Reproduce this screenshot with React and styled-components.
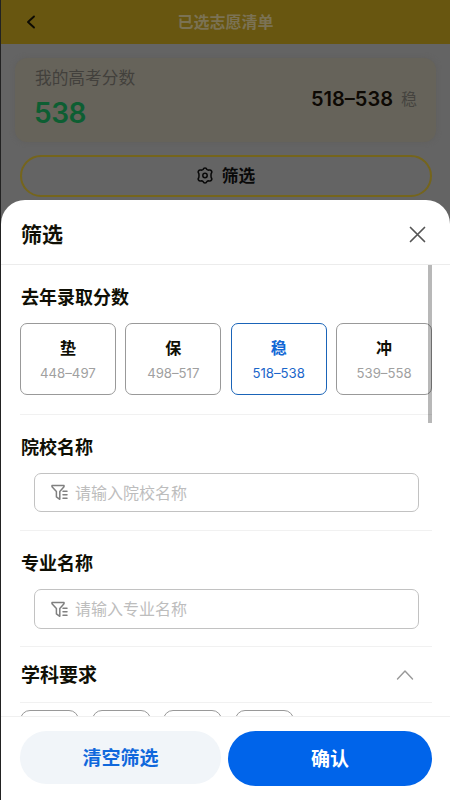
import React from "react";
import styled, { createGlobalStyle } from "styled-components";

const Global = createGlobalStyle`
  * { box-sizing: border-box; }
  body { margin: 0; background: #fff; }
  button, input { font: inherit; margin: 0; }
  h1, h2, h3, p { margin: 0; }
`;

const Screen = styled.div`
  position: relative;
  width: 450px;
  height: 800px;
  overflow: hidden;
  border-left: 1px solid #222;
  background: #646464;
  color: #0f0f05;
  font-family: Inter, "Noto Sans CJK SC", sans-serif;
`;

const TopBar = styled.header`
  display: grid;
  grid-template-columns: 60px 1fr 60px;
  align-items: center;
  height: 44px;
  background: #685610;
`;

const BackButton = styled.button`
  display: flex;
  padding: 0 0 0 22px;
  border: 0;
  background: none;
  color: #0d0b04;
`;

const PageTitle = styled.h1`
  color: #7b7254;
  font-size: 16px;
  line-height: 24px;
  font-weight: 700;
  text-align: center;
`;

const ScoreCard = styled.section`
  display: flex;
  align-items: center;
  justify-content: space-between;
  height: 84px;
  margin: 14px 14px 0;
  padding: 0 19px 3px 20px;
  border-radius: 12px;
  background: #66635a;
  box-shadow: 0 0 5px #605f5d;
`;

const ScoreLabel = styled.p`
  color: #42403c;
  font-size: 16.7px;
  line-height: 24px;
`;

const Score = styled.p`
  margin: 4px 0 0 -1px;
  color: #0d5e32;
  font-size: 28px;
  line-height: 38px;
  font-weight: 600;
  letter-spacing: -0.4px;
`;

const Range = styled.div`
  display: flex;
  align-items: center;
  gap: 8px;
  font-size: 20px;
  line-height: 28px;
  font-weight: 600;
  color: #0d0904;
`;

const RangeTag = styled.span`
  color: #45433f;
  font-size: 16px;
  font-weight: 400;
`;

const FilterTrigger = styled.button`
  display: flex;
  align-items: center;
  justify-content: center;
  gap: 9px;
  width: 412px;
  height: 42px;
  margin: 13px 0 0 19px;
  padding: 0 0 2px;
  border: 2px solid #75651c;
  border-radius: 21px;
  background: none;
  color: #090909;
  font-size: 16.7px;
  font-weight: 700;
`;

const Sheet = styled.section`
  position: absolute;
  inset: 200px 0 0;
  display: flex;
  flex-direction: column;
  border-radius: 24px 24px 0 0;
  background: #fff;
  overflow: hidden;
`;

const SheetHeader = styled.header`
  display: flex;
  flex: none;
  align-items: center;
  justify-content: space-between;
  height: 65px;
  padding: 4px 24px 0 20px;
  border-bottom: 1px solid #ececec;
`;

const SheetTitle = styled.h2`
  padding-top: 1px;
  font-size: 21px;
  line-height: 30px;
  font-weight: 700;
`;

const CloseButton = styled.button`
  display: flex;
  padding: 0;
  border: 0;
  background: none;
  color: #555;
`;

const SheetBody = styled.div`
  position: relative;
  flex: 1;
  min-height: 0;
  padding: 0 18px 0 19px;
  overflow: hidden;
`;

const ScrollThumb = styled.div`
  position: absolute;
  top: 0;
  right: 18px;
  width: 4px;
  height: 158px;
  background: rgba(0, 0, 0, 0.28);
`;

const Group = styled.section`
  height: ${(p) => p.$height}px;
  padding-top: 20px;
  border-bottom: 1px solid #f1f1f1;
`;

const GroupTitle = styled.h3`
  padding-left: 1px;
  font-size: ${(p) => p.$size || 18}px;
  line-height: 26px;
  font-weight: 700;
`;

const Tiers = styled.div`
  display: grid;
  grid-template-columns: repeat(4, 1fr);
  gap: 9.5px;
  margin-top: 12px;
`;

const Tier = styled.button`
  display: flex;
  flex-direction: column;
  align-items: center;
  height: 72px;
  padding: 12px 0 0;
  border: 1px solid ${(p) => (p.$selected ? "#1a64b8" : "#999")};
  border-radius: 7px;
  background: #fff;
  color: ${(p) => (p.$selected ? "#1268d6" : "#0f0f05")};
`;

const TierName = styled.span`
  font-size: 16px;
  line-height: 24px;
  font-weight: 700;
`;

const TierRange = styled.span`
  margin-top: 4px;
  color: ${(p) => (p.$selected ? "#1b66ca" : "#a0a0a0")};
  font-size: 13.2px;
  line-height: 18px;
`;

const Field = styled.label`
  display: flex;
  align-items: center;
  gap: 7px;
  height: ${(p) => p.$height}px;
  margin: 12px 13.5px 0 14px;
  padding-left: 16px;
  border: 1px solid #c2c2c2;
  border-radius: 7px;
  color: #808080;
`;

const Input = styled.input`
  flex: 1;
  min-width: 0;
  padding: 0;
  border: 0;
  outline: 0;
  background: none;
  font-size: 16px;
  line-height: 24px;
  &::placeholder { color: #bdbdbd; opacity: 1; }
`;

const Collapse = styled.div`
  display: flex;
  align-items: center;
  justify-content: space-between;
  height: 56px;
  padding-right: 18px;
  border-bottom: 1px solid #f1f1f1;
  color: #999;
  & > h3 { padding-top: 3px; color: #0f0f05; }
`;

const Chips = styled.div`
  display: flex;
  gap: 12.7px;
  padding-top: 7px;
`;

const Chip = styled.div`
  width: 59px;
  height: 36px;
  border: 1px solid #999;
  border-radius: 10px;
`;

const Footer = styled.footer`
  display: flex;
  flex: none;
  align-items: flex-start;
  gap: 7px;
  height: 84px;
  padding: 14px 18px 0 19px;
  border-top: 1px solid #f0f0f0;
  background: #fff;
`;

const Action = styled.button`
  width: ${(p) => (p.$primary ? 204 : 201)}px;
  height: ${(p) => (p.$primary ? 55 : 53)}px;
  padding: 0 0 2px;
  border: 0;
  border-radius: 28px;
  background: ${(p) => (p.$primary ? "#0064ea" : "#f1f5f9")};
  color: ${(p) => (p.$primary ? "#fff" : "#1068dc")};
  font-size: 19px;
  font-weight: 700;
`;

const Stroke = styled.svg`
  flex: none;
  fill: none;
  stroke: currentColor;
  stroke-width: ${(p) => p.$weight}px;
  stroke-linecap: round;
  stroke-linejoin: round;
`;

const FilterIcon = () => (
  <Stroke $weight={1.5} width="17" height="17" viewBox="0 0 17 17">
    <path d="M8.8 15.3 5.4 12.9V7.6L1 2.7V1.5h12v1.2L8.8 7.4v7.9Z" />
    <path d="M12 7.2h4M12 10.7h4M12 14.2h4" />
  </Stroke>
);

const GearIcon = () => (
  <Stroke $weight={1.5} width="16" height="17" viewBox="0 0 16 17">
    <path d="M6.1 2.5Q6.5 1 8 1t1.9 1.5q1 .9 2.3.5 1.5-.3 2.3 1t-.3 2.4q-.4 2.1 0 4.2 1.1 1.1.3 2.4t-2.3 1q-1.3-.4-2.3.5Q9.500 16 8 16t-1.900-1.500q-1-.9-2.300-.5-1.500.3-2.300-1t.3-2.400q.4-2.100 0-4.200Q.7 5.300 1.500 4t2.300-1q1.300.4 2.300-.5Z" />
    <circle cx="8" cy="8.5" r="2.2" />
  </Stroke>
);

const tiers = [
  { name: "垫", range: "448–497" },
  { name: "保", range: "498–517" },
  { name: "稳", range: "518–538", selected: true },
  { name: "冲", range: "539–558" },
];

export default function App() {
  return (
    <Screen>
      <Global />
      <TopBar>
        <BackButton aria-label="返回">
          <Stroke $weight={1.9} width="14" height="16" viewBox="0 0 14 16">
            <path d="M11 2.500 5 8l6 5.500" />
          </Stroke>
        </BackButton>
        <PageTitle>已选志愿清单</PageTitle>
      </TopBar>
      <ScoreCard>
        <div>
          <ScoreLabel>我的高考分数</ScoreLabel>
          <Score>538</Score>
        </div>
        <Range>518–538<RangeTag>稳</RangeTag></Range>
      </ScoreCard>
      <FilterTrigger><GearIcon />筛选</FilterTrigger>

      <Sheet>
        <SheetHeader>
          <SheetTitle>筛选</SheetTitle>
          <CloseButton aria-label="关闭">
            <Stroke $weight={1.7} width="17" height="17" viewBox="0 0 17 17">
              <path d="m1.5 1.5 14 14m0-14-14 14" />
            </Stroke>
          </CloseButton>
        </SheetHeader>
        <SheetBody>
          <Group $height={150}>
            <GroupTitle>去年录取分数</GroupTitle>
            <Tiers>
              {tiers.map((t) => (
                <Tier key={t.name} $selected={t.selected}>
                  <TierName>{t.name}</TierName>
                  <TierRange $selected={t.selected}>{t.range}</TierRange>
                </Tier>
              ))}
            </Tiers>
          </Group>
          <Group $height={116}>
            <GroupTitle>院校名称</GroupTitle>
            <Field $height={39}><FilterIcon /><Input placeholder="请输入院校名称" /></Field>
          </Group>
          <Group $height={116}>
            <GroupTitle>专业名称</GroupTitle>
            <Field $height={40}><FilterIcon /><Input placeholder="请输入专业名称" /></Field>
          </Group>
          <Collapse>
            <GroupTitle $size={19}>学科要求</GroupTitle>
            <Stroke $weight={1.4} width="18" height="12" viewBox="0 0 18 12">
              <path d="m1.5 10 7.5-8 7.5 8" />
            </Stroke>
          </Collapse>
          <Chips><Chip /><Chip /><Chip /><Chip /></Chips>
          <ScrollThumb />
        </SheetBody>
        <Footer>
          <Action>清空筛选</Action>
          <Action $primary>确认</Action>
        </Footer>
      </Sheet>
    </Screen>
  );
}
